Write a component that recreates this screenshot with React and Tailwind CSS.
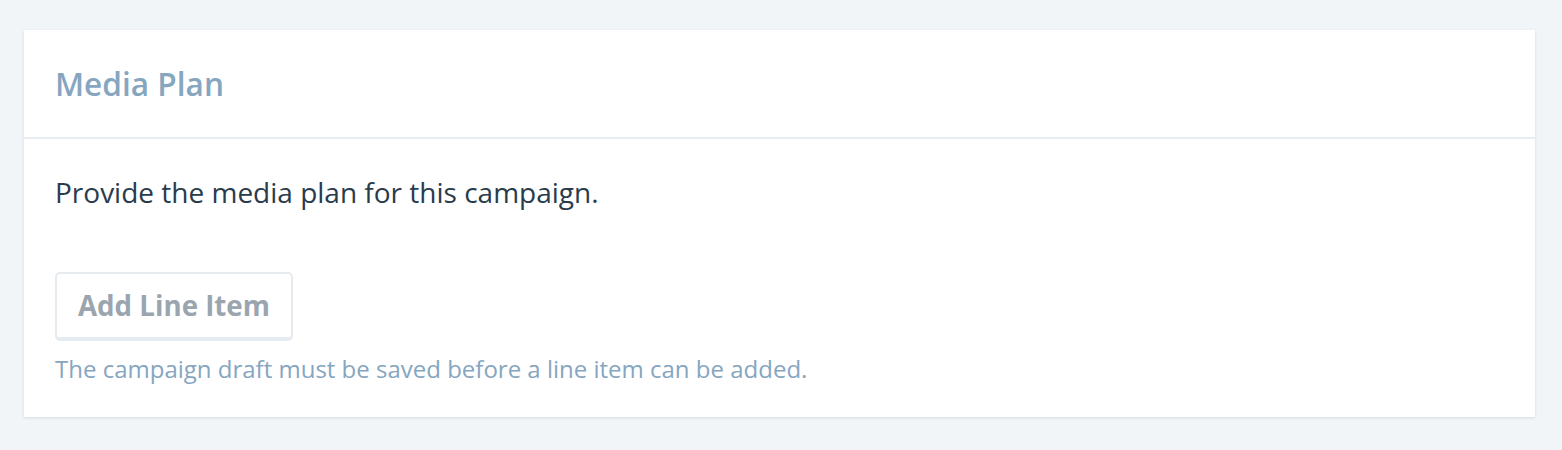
import React from 'react';

const MediaPlanCard = () => {
  return (
    <div className="bg-white shadow-[0_1px_3px_rgba(20,40,70,0.12)]">
      <div className="h-[109px] flex items-center px-[31px] border-b-2 border-[#e8edf1]">
        <h2 className="text-[31.6px] font-semibold text-[#86a6bf] leading-none">Media Plan</h2>
      </div>
      <div className="px-[31px] pt-[32px] pb-[30px]">
        <p className="text-[28px] text-[#2a3b4c] leading-[42px]">Provide the media plan for this campaign.</p>
        <button
          type="button"
          disabled
          className="mt-[59px] h-[69px] px-[21px] rounded-[5px] border-2 border-b-4 border-[#e6ebf0] bg-white text-[27.7px] font-bold text-[#9aa5af]"
        >
          Add Line Item
        </button>
        <p className="mt-[10px] text-[24px] text-[#86a6bf] leading-[36px]">
          The campaign draft must be saved before a line item can be added.
        </p>
      </div>
    </div>
  );
};

export default function App() {
  return (
    <div className="min-h-[450px] bg-[#f2f5f8] pt-[30px] px-[24px] pr-[27px]" style={{ fontFamily: '"Open Sans", sans-serif' }}>
      <MediaPlanCard />
    </div>
  );
}
